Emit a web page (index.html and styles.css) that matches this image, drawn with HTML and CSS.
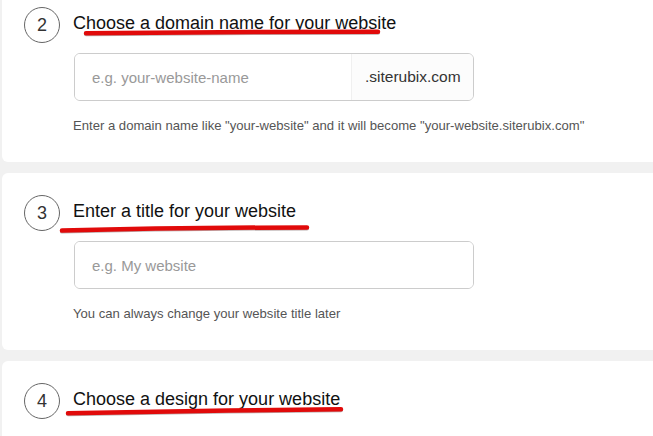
FILE: index.html
```html
<!DOCTYPE html>
<html>
<head>
    <meta charset="UTF-8">
    <title>Create your website</title>
    <link rel="stylesheet" href="styles.css">
</head>
<body>
    <div class="steps">
        <div class="step">
            <div class="step-head">
                <span class="step-num">2</span>
                <h2>Choose a domain name for your website</h2>
                <svg class="mark" width="360" height="40" viewBox="0 0 360 40">
                    <path class="mark-shade" d="M62 27.3 C 150 26.3, 260 25.6, 354 25.7"/>
                    <path class="mark-line" d="M62 26.3 C 150 25.3, 260 24.6, 354 24.7"/>
                </svg>
            </div>
            <div class="field field-split">
                <input type="text" placeholder="e.g. your-website-name">
                <span class="suffix">.siterubix.com</span>
            </div>
            <p class="hint">Enter a domain name like "your-website" and it will become "your-website.siterubix.com"</p>
        </div>

        <div class="step">
            <div class="step-head">
                <span class="step-num">3</span>
                <h2>Enter a title for your website</h2>
                <svg class="mark" width="360" height="40" viewBox="0 0 360 40">
                    <path class="mark-shade" d="M38 36.6 C 100 35, 200 33.6, 283 33.4"/>
                    <path class="mark-line" d="M38 35.6 C 100 34, 200 32.6, 283 32.4"/>
                </svg>
            </div>
            <div class="field">
                <input type="text" placeholder="e.g. My website">
            </div>
            <p class="hint">You can always change your website title later</p>
        </div>

        <div class="step">
            <div class="step-head">
                <span class="step-num">4</span>
                <h2>Choose a design for your website</h2>
                <svg class="mark" width="360" height="40" viewBox="0 0 360 40">
                    <path class="mark-shade" d="M44 31.3 C 120 29.8, 230 27.8, 317 27.3"/>
                    <path class="mark-line" d="M44 30.3 C 120 28.8, 230 26.8, 317 26.3"/>
                </svg>
            </div>
        </div>
    </div>
</body>
</html>
```

FILE: styles.css
```css
body {
    margin: 0;
    background: #f1f1f1;
    font-family: 'Liberation Sans', Arial, sans-serif;
    color: #222;
    overflow: hidden;
}
.steps {
    margin-top: -15px;
    width: 720px;
}
.step {
    background: white;
    margin: 0 0 11px 2px;
    border-radius: 6px;
    padding: 22px 0 27px 22px;
    height: 128px;
}
.step-head {
    position: relative;
    display: flex;
    align-items: center;
    gap: 13px;
}
.step-num {
    box-sizing: border-box;
    width: 36px;
    height: 36px;
    border: 1.5px solid #666;
    border-radius: 50%;
    display: flex;
    align-items: center;
    justify-content: center;
    font-size: 18px;
    color: #333;
}
.step-head h2 {
    margin: 0 0 4px;
    font-size: 18px;
    font-weight: normal;
    color: #111;
}
.mark {
    position: absolute;
    left: 0;
    top: 0;
    overflow: visible;
    pointer-events: none;
}
.mark path {
    fill: none;
    stroke-linecap: round;
}
.mark-line {
    stroke: #e10a0a;
    stroke-width: 4.5;
}
.mark-shade {
    stroke: rgba(60, 30, 30, 0.35);
    stroke-width: 4;
}
.field {
    display: flex;
    box-sizing: border-box;
    width: 400px;
    height: 48px;
    margin: 10px 0 0 50px;
    border: 1px solid #ccc;
    border-radius: 6px;
    overflow: hidden;
}
.field input {
    flex: 1;
    min-width: 0;
    border: none;
    outline: none;
    padding: 0 17px;
    font-family: inherit;
    font-size: 15px;
    color: #333;
}
.field input::placeholder {
    color: #999;
}
.suffix {
    width: 122px;
    box-sizing: border-box;
    padding-left: 13px;
    display: flex;
    align-items: center;
    background: #fcfcfc;
    border-left: 1px solid #f0f0f0;
    font-size: 15.5px;
    color: #333;
}
.hint {
    margin: 16px 0 0 49px;
    font-size: 13.1px;
    line-height: 18px;
    color: #555;
}
```
